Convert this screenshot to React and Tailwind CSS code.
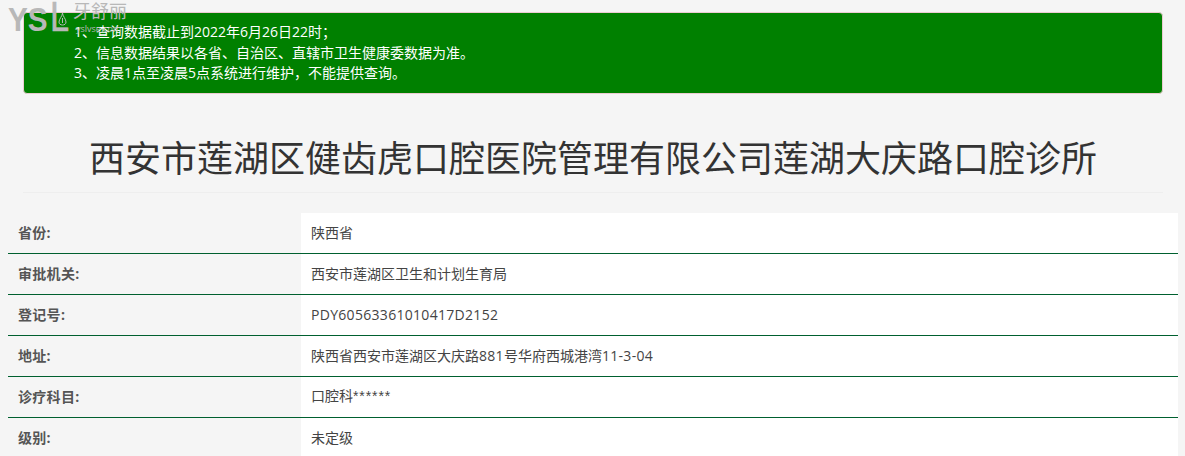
const font = { fontFamily: '"Open Sans", "Noto Sans CJK SC", sans-serif' };
const logoFont = { fontFamily: '"Liberation Sans", sans-serif' };
const L = ({ children }) => <span className="tracking-[0.3px]">{children}</span>;
const rows = [
  ["省份:", "陕西省"],
  ["审批机关:", "西安市莲湖区卫生和计划生育局"],
  ["登记号:", <L>PDY60563361010417D2152</L>],
  ["地址:", <>陕西省西安市莲湖区大庆路<L>881</L>号华府西城港湾<L>11-3-04</L></>],
  ["诊疗科目:", <>口腔科<span className="tracking-[0.9px]" style={logoFont}>******</span></>],
  ["级别:", "未定级"],
];
export default function App() {
  return (
    <div style={font} className="relative h-[456px] overflow-hidden bg-[#f5f5f5] text-[#333]">
      <div className="px-[23px] pt-[12px]">
        <div className="h-[82px] w-[1140px] rounded-[4px] border border-[#ebccd1] bg-[#008000] pl-[50px] pt-[9px] text-[14px] leading-[20.5px] text-white">
          <div>1、查询数据截止到2022年6月26日22时；</div>
          <div>2、信息数据结果以各省、自治区、直辖市卫生健康委数据为准。</div>
          <div>3、凌晨1点至凌晨5点系统进行维护，不能提供查询。</div>
        </div>
      </div>
      <div className="mx-[23px] mt-[43px] w-[1140px] border-b border-[#eee] pb-[11px] text-center text-[36px] leading-[44px]">
        西安市莲湖区健齿虎口腔医院管理有限公司莲湖大庆路口腔诊所
      </div>
      <div className="mx-[8px] mt-[20px] w-[1170px] text-[14px]">
        {rows.map(([k, v]) => (
          <div key={k} className="flex h-[41px] border-b border-[#00602f] last:border-b-0">
            <div className="flex w-[293px] items-center pb-[2px] pl-[10px] font-bold tracking-[0.3px] text-[#555]">{k}</div>
            <div className="flex flex-1 items-center whitespace-pre bg-white pb-[2px] pl-[10px] text-[#444]"><div>{v}</div></div>
          </div>
        ))}
      </div>
      <div className="pointer-events-none absolute left-0 top-0 flex items-start text-[#b8b8b8]">
        <span style={logoFont} className="ml-[8px] mt-[8px] w-[42px] origin-left scale-x-[0.9] whitespace-nowrap text-[33px] font-bold leading-[24px]">YS</span>
        <span style={logoFont} className="mt-[2px] w-[17px] origin-left scale-x-[0.8] text-[43px] leading-[28px] [-webkit-text-stroke:0.6px_#b8b8b8]">L</span>
        <svg className="ml-[-10px] mt-[12px]" width="11" height="14" viewBox="0 0 11 14" fill="none" stroke="currentColor" strokeWidth="1">
          <path d="M5.5 1 C5.5 4 2 7 2 10 C2 12 3.5 13 5.5 13 C7.5 13 9 12 9 10 C9 7 5.5 4 5.5 1 Z" />
          <path d="M5.5 6 V11" />
        </svg>
        <div className="ml-[5px] flex flex-col">
          <span className="mt-[-1px] text-[18px] leading-[24px]">牙舒丽</span>
          <span className="ml-[3px] mt-[1px] text-[9px] leading-[10px]">yslvse.com</span>
        </div>
      </div>
    </div>
  );
}
